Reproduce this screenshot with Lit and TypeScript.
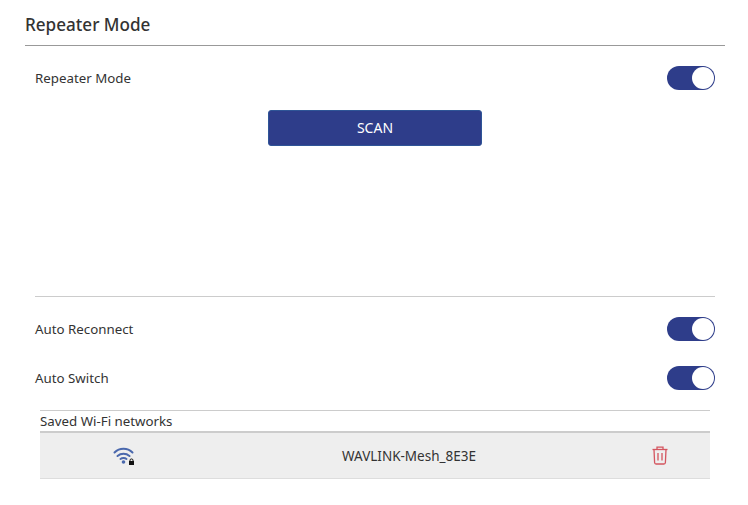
import { LitElement, html, css } from 'lit';
import { customElement, property } from 'lit/decorators.js';

@customElement('app-switch')
export class AppSwitch extends LitElement {
  @property({ type: Boolean }) on = true;

  static styles = css`
    :host {
      display: block;
    }
    .track {
      box-sizing: border-box;
      display: flex;
      justify-content: flex-end;
      width: 48px;
      height: 24px;
      padding: 1px;
      border-radius: 12px;
      background: #2e3d8a;
    }
    .knob {
      width: 22px;
      height: 22px;
      border-radius: 50%;
      background: #fff;
    }
  `;

  render() {
    return html`<div class="track"><div class="knob"></div></div>`;
  }
}

@customElement('app-root')
export class AppRoot extends LitElement {
  static styles = css`
    :host {
      display: block;
      box-sizing: border-box;
      width: 748px;
      height: 505px;
      padding: 0 23px 0 25px;
      background: #fff;
      color: #333;
      font-family: "Noto Sans", sans-serif;
      font-size: 13.3px;
    }
    .title {
      box-sizing: border-box;
      height: 46px;
      padding-top: 13px;
      border-bottom: 1px solid #999;
      font-size: 17.1px;
      font-weight: 500;
      line-height: 24px;
    }
    .body {
      padding: 0 10px;
    }
    .row {
      display: flex;
      align-items: center;
      justify-content: space-between;
      height: 49px;
    }
    .first {
      height: 64px;
    }
    .scan-wrap {
      display: flex;
      justify-content: center;
      height: 186px;
      border-bottom: 1px solid #ccc;
    }
    .scan {
      box-sizing: border-box;
      width: 214px;
      height: 36px;
      padding: 0 0 2px;
      border: 1px solid #2f5597;
      border-radius: 3px;
      background: #2e3d8a;
      color: #fff;
      font: inherit;
      font-size: 14px;
    }
    .settings {
      padding-top: 7px;
    }
    .saved {
      margin: 0 5px;
    }
    .saved-title {
      height: 20px;
      margin-top: 8px;
      border-top: 1px solid #ccc;
      line-height: 21px;
    }
    .network {
      box-sizing: border-box;
      display: grid;
      grid-template-columns: 167px 1fr 100px;
      align-items: center;
      height: 48px;
      border-top: 2px solid #ccc;
      border-bottom: 1px solid #ddd;
      background: #eee;
    }
    .network > * {
      justify-self: center;
    }
    .name {
      font-size: 13.5px;
      padding-left: 1px;
    }
    svg {
      display: block;
    }
  `;

  render() {
    return html`
      <div class="title">Repeater Mode</div>
      <div class="body">
        <div class="row first"><span>Repeater Mode</span><app-switch></app-switch></div>
        <div class="scan-wrap"><button class="scan">SCAN</button></div>
        <div class="settings">
          <div class="row"><span>Auto Reconnect</span><app-switch></app-switch></div>
          <div class="row"><span>Auto Switch</span><app-switch></app-switch></div>
        </div>
        <div class="saved">
          <div class="saved-title">Saved Wi-Fi networks</div>
          <div class="network">
            <svg width="24" height="20" viewBox="0 0 24 20" fill="none" stroke="#4a68ad" stroke-width="2" stroke-linecap="round">
              <path d="M2.5 6.5C7.5 1.5 15.5 1.5 20.5 6.5" />
              <path d="M5.5 10C9 7 14 7 17.5 10" />
              <path d="M8.5 13C10 11.8 13 11.8 14.5 13" />
              <circle cx="11.5" cy="16" r="1.8" fill="#4a68ad" stroke="none" />
              <rect x="17" y="15" width="5" height="4" fill="#111" stroke="none" />
              <path d="M18 15V14C18 12.6 21 12.6 21 14V15" stroke="#111" stroke-width="1" fill="none" />
            </svg>
            <span class="name">WAVLINK-Mesh_8E3E</span>
            <svg width="16" height="19" viewBox="0 0 16 19" fill="none" stroke="#d4555f" stroke-width="1.3">
              <path d="M0.5 3.5H15.5" />
              <path d="M5 3.5V1.2H11V3.5" />
              <path d="M2 3.5L2.6 16.5Q2.7 18 4 18H12Q13.3 18 13.4 16.5L14 3.5" />
              <path d="M6 7V14.5M10 7V14.5" />
            </svg>
          </div>
        </div>
      </div>
    `;
  }
}
